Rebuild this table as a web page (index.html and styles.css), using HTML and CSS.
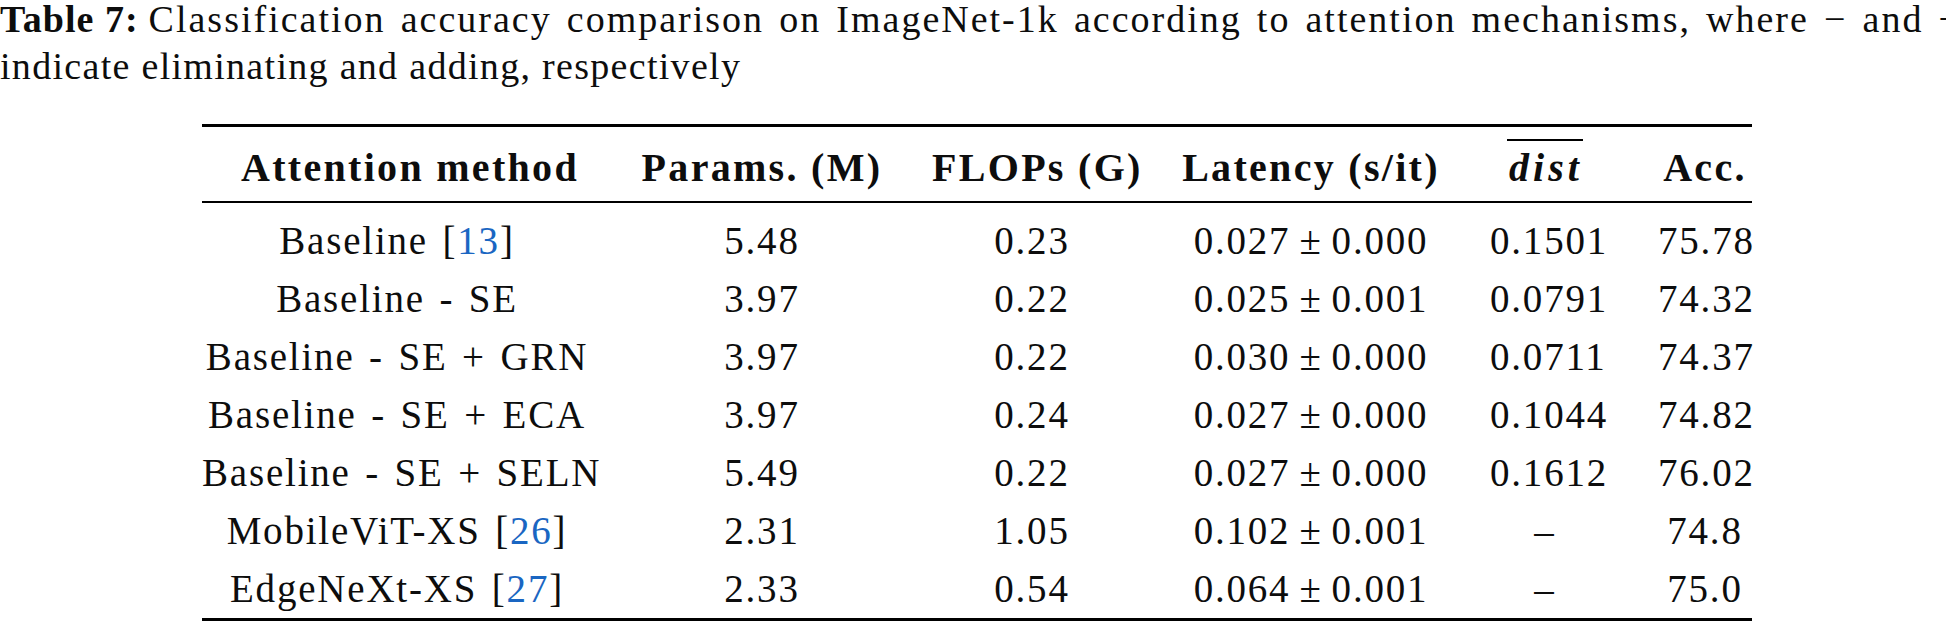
FILE: index.html
```html
<!DOCTYPE html>
<html lang="en">
<head>
<meta charset="utf-8">
<title>Table 7</title>
<link rel="stylesheet" href="styles.css">
</head>
<body>
<div class="page">
  <p class="caption">
    <span class="cap-line cap-first"><b class="cap-label">Table 7:</b>Classification accuracy comparison on ImageNet-1k according to attention mechanisms, where − and +</span>
    <span class="cap-line">indicate eliminating and adding, respectively</span>
  </p>
  <table class="results">
    <colgroup>
      <col class="c-method">
      <col class="c-params">
      <col class="c-flops">
      <col class="c-lat">
      <col class="c-dist">
      <col class="c-acc">
    </colgroup>
    <thead>
      <tr>
        <th class="h-method">Attention method</th>
        <th>Params. (M)</th>
        <th>FLOPs (G)</th>
        <th>Latency (s/it)</th>
        <th><span class="dist">dist</span></th>
        <th class="acc">Acc.</th>
      </tr>
    </thead>
    <tbody>
      <tr><td>Baseline [<a class="ref">13</a>]</td><td>5.48</td><td>0.23</td><td>0.027<span class="pm">±</span>0.000</td><td>0.1501</td><td class="acc">75.78</td></tr>
      <tr><td>Baseline - SE</td><td>3.97</td><td>0.22</td><td>0.025<span class="pm">±</span>0.001</td><td>0.0791</td><td class="acc">74.32</td></tr>
      <tr><td>Baseline - SE + GRN</td><td>3.97</td><td>0.22</td><td>0.030<span class="pm">±</span>0.000</td><td>0.0711</td><td class="acc">74.37</td></tr>
      <tr><td>Baseline - SE + ECA</td><td>3.97</td><td>0.24</td><td>0.027<span class="pm">±</span>0.000</td><td>0.1044</td><td class="acc">74.82</td></tr>
      <tr><td>Baseline - SE + SELN</td><td>5.49</td><td>0.22</td><td>0.027<span class="pm">±</span>0.000</td><td>0.1612</td><td class="acc">76.02</td></tr>
      <tr><td>MobileViT-XS [<a class="ref">26</a>]</td><td>2.31</td><td>1.05</td><td>0.102<span class="pm">±</span>0.001</td><td>–</td><td class="acc">74.8</td></tr>
      <tr><td>EdgeNeXt-XS [<a class="ref">27</a>]</td><td>2.33</td><td>0.54</td><td>0.064<span class="pm">±</span>0.001</td><td>–</td><td class="acc">75.0</td></tr>
    </tbody>
  </table>
</div>
</body>
</html>
```

FILE: styles.css
```css
html, body {
  margin: 0;
  padding: 0;
  background: #ffffff;
}

body {
  overflow: hidden;
  color: #0d0d0d;
  font-family: "Liberation Serif", "Times New Roman", serif;
}

.page {
  width: 1962px;
}

.caption {
  margin: -4px 0 0 0;
  font-size: 38px;
  line-height: 47px;
  letter-spacing: 1.3px;
}

.cap-line {
  display: block;
}

.cap-first {
  text-align: justify;
  text-align-last: justify;
  letter-spacing: 2px;
}

.cap-label {
  display: inline-block;
  margin-right: 10px;
  font-weight: bold;
  letter-spacing: 1px;
}

.results {
  margin: 34px 0 0 202px;
  width: 1550px;
  table-layout: fixed;
  border-collapse: collapse;
  font-size: 39px;
  letter-spacing: 1.8px;
  word-spacing: 3px;
}

.c-method { width: 390px; }
.c-params { width: 340px; }
.c-flops { width: 200px; }
.c-lat { width: 358px; }
.c-dist { width: 110px; }
.c-acc { width: 152px; }

.results thead tr {
  border-top: 3px solid #000;
  border-bottom: 2px solid #000;
}

.results tbody tr:last-child {
  border-bottom: 3px solid #000;
}

.results th {
  font-size: 40px;
  font-weight: bold;
  letter-spacing: 2.3px;
  word-spacing: 0;
  line-height: 58px;
  padding: 12px 0 4px 0;
  text-align: center;
  white-space: nowrap;
}

.results th.h-method {
  padding-left: 26px;
}

.results td {
  line-height: 58px;
  padding: 0;
  text-align: center;
  white-space: nowrap;
}

.results tbody tr:first-child td {
  padding-top: 9px;
}

.results .acc {
  padding-left: 58px;
}

.ref {
  color: #1a66c2;
}

.pm {
  margin: 0 9px;
}

.dist {
  display: inline-block;
  font-style: italic;
  letter-spacing: 4px;
  line-height: 36px;
  padding: 9px 0 0 2px;
  border-top: 2px solid #000;
}
```
